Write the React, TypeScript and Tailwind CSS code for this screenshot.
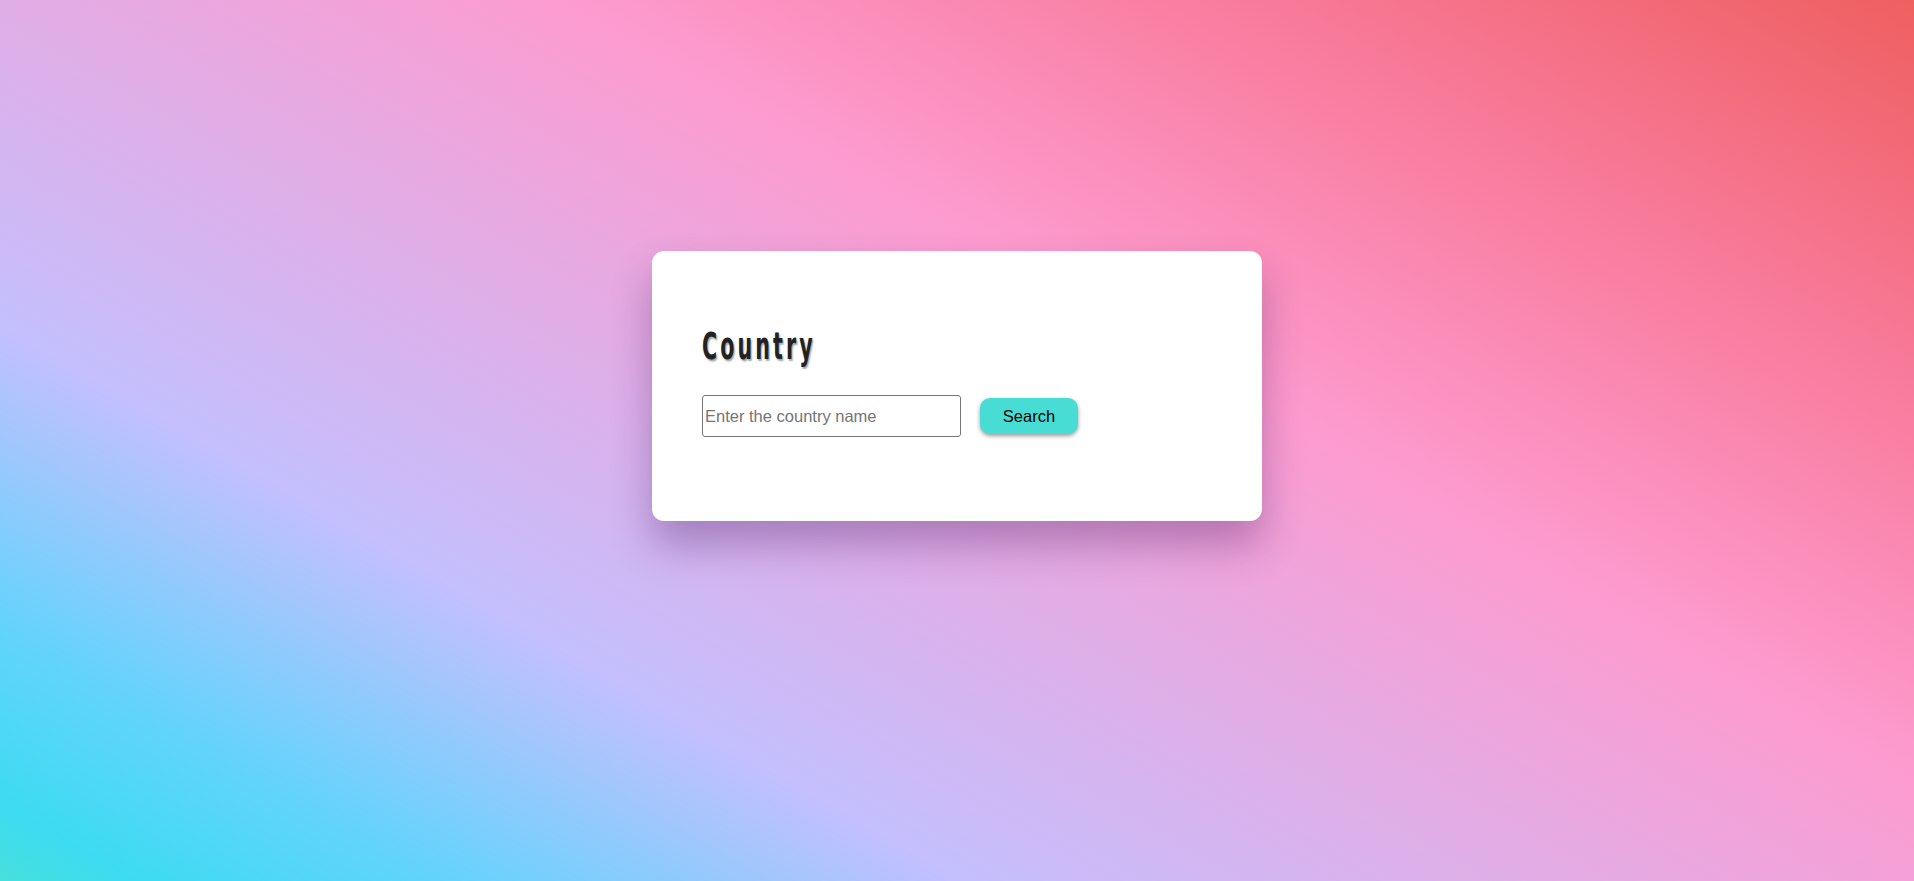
import React from 'react'

export default function App() {
  return (
    <div
      className="min-h-screen h-[881px] w-full flex justify-center pt-[251px]
                 bg-[linear-gradient(30deg,#46e0dc_0%,#3ddbf2_4%,#64d3fc_13%,#c4bffd_28%,#fd9bcf_61%,#f87a9a_81%,#ee5f5f_100%)]"
    >
      {/* card */}
      <div className="w-[610px] h-[270px] bg-white rounded-[12px] shadow-[0_24px_40px_rgba(60,20,90,0.32)] px-[50px] pt-[74px]">
        <h1
          className="inline-block origin-left scale-x-[0.62] text-[37px] leading-[44px] font-bold tracking-[5px] text-[#222]
                     [text-shadow:2px_2px_2px_rgba(0,0,0,0.35)]
                     font-['Liberation_Sans_Narrow','DejaVu_Sans_Condensed','Liberation_Sans',sans-serif]"
        >
          Country
        </h1>

        <div className="flex items-center mt-[26px]">
          <input
            type="text"
            placeholder="Enter the country name"
            className="w-[259px] h-[42px] border border-[#767676] rounded-[3px] px-[2px] text-[16.5px] text-black
                       placeholder:text-[#757575] outline-none font-['Liberation_Sans',Arial,sans-serif]"
          />
          <button
            className="ml-[19px] w-[98px] h-[36px] rounded-[10px] bg-[#47ddd4] text-black text-[16.5px]
                       shadow-[0_2px_4px_rgba(0,0,0,0.4)] font-['Liberation_Sans',Arial,sans-serif]"
          >
            Search
          </button>
        </div>
      </div>
    </div>
  )
}
